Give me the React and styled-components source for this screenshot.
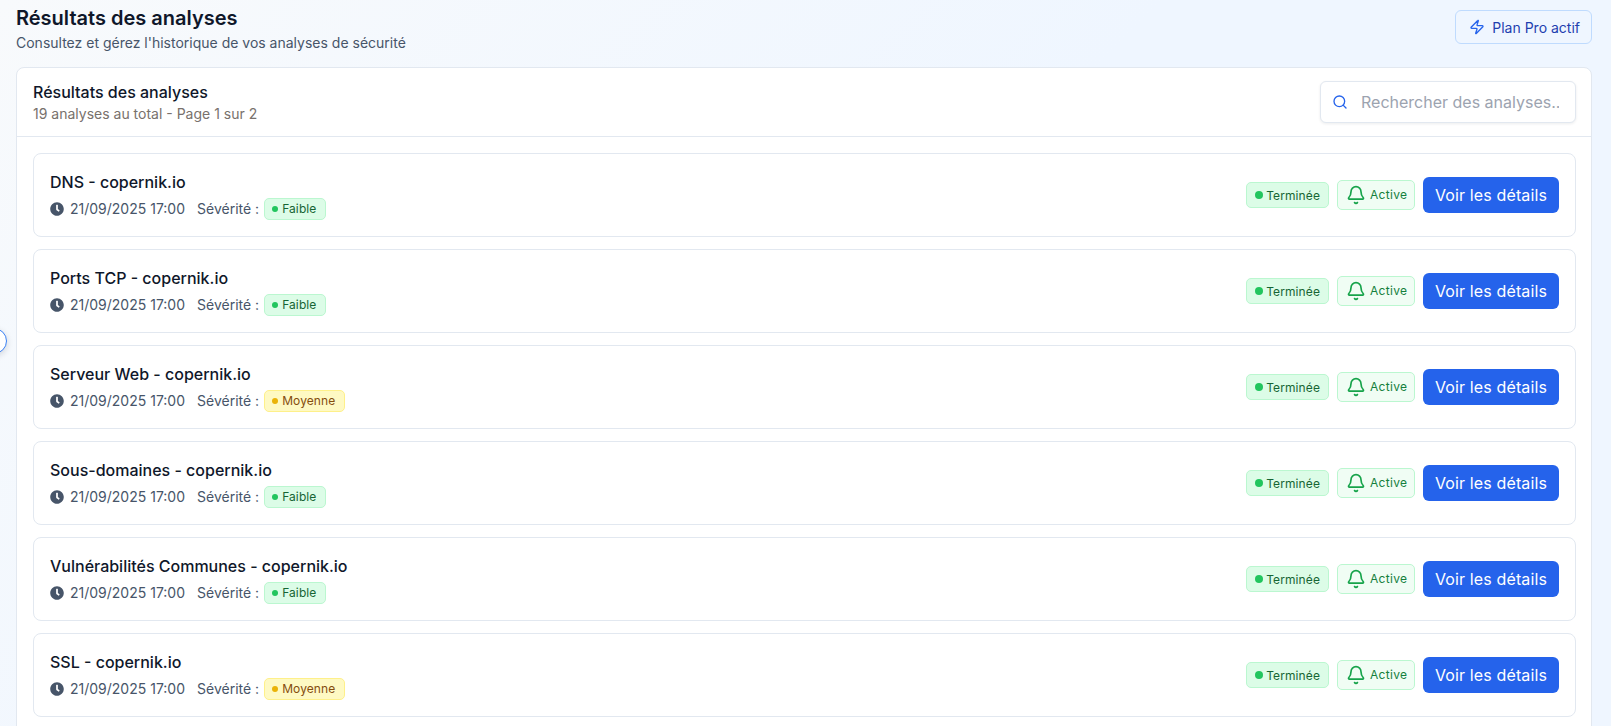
import React from "react"
import styled, { createGlobalStyle } from "styled-components"
import { Bell, Search, Zap } from "lucide-react"
import { FaClock } from "react-icons/fa"

const analyses = [
  { name: "DNS", severity: "Faible" },
  { name: "Ports TCP", severity: "Faible" },
  { name: "Serveur Web", severity: "Moyenne" },
  { name: "Sous-domaines", severity: "Faible" },
  { name: "Vulnérabilités Communes", severity: "Faible" },
  { name: "SSL", severity: "Moyenne" },
]

const App = () => {
  return (
    <>
      <GlobalStyle />
      <Page>
        <SidebarToggle />
        <PageHeader>
          <div>
            <PageTitle>Résultats des analyses</PageTitle>
            <PageSubtitle>Consultez et gérez l'historique de vos analyses de sécurité</PageSubtitle>
          </div>
          <PlanBadge>
            <Zap size={16} strokeWidth={2} color="#2563eb" />
            Plan Pro actif
          </PlanBadge>
        </PageHeader>
        <Panel>
          <PanelHeader>
            <div>
              <PanelTitle>Résultats des analyses</PanelTitle>
              <PanelSubtitle>19 analyses au total - Page 1 sur 2</PanelSubtitle>
            </div>
            <SearchBox>
              <Search size={16} strokeWidth={2} color="#2563eb" />
              <SearchInput placeholder="Rechercher des analyses..." readOnly />
            </SearchBox>
          </PanelHeader>
          <RowList>
            {analyses.map((a) => (
              <Row key={a.name}>
                <div>
                  <RowTitle>{a.name} - copernik.io</RowTitle>
                  <RowMeta>
                    <DateLabel>
                      <FaClock size={14} color="#475569" />
                      21/09/2025 17:00
                    </DateLabel>
                    <SeverityLabel>Sévérité :</SeverityLabel>
                    <SeverityTag $level={a.severity}>
                      <Dot $size={6} $color={a.severity === "Faible" ? "#22c55e" : "#eab308"} />
                      {a.severity}
                    </SeverityTag>
                  </RowMeta>
                </div>
                <RowActions>
                  <StatusTag>
                    <Dot $size={8} $color="#22c55e" />
                    Terminée
                  </StatusTag>
                  <AlertTag>
                    <Bell size={20} strokeWidth={2} color="#16a34a" />
                    <AlertText>Active</AlertText>
                  </AlertTag>
                  <DetailsButton>Voir les détails</DetailsButton>
                </RowActions>
              </Row>
            ))}
          </RowList>
        </Panel>
      </Page>
    </>
  )
}

export default App

const GlobalStyle = createGlobalStyle`
  html, body {
    margin: 0;
    height: 100%;
    overflow: hidden;
  }
  body {
    font-family: Inter, "Liberation Sans", sans-serif;
    color: #0f172a;
  }
  * {
    box-sizing: border-box;
  }
`

const Page = styled.div`
  position: relative;
  height: 726px;
  overflow: hidden;
  padding: 6px 19px 0 16px;
  background: linear-gradient(135deg, #f8fafc 0%, #eff6ff 50%, #eff6ff 100%);
`

const SidebarToggle = styled.div`
  position: absolute;
  left: -19px;
  top: 328px;
  width: 26px;
  height: 26px;
  border-radius: 50%;
  background: #fff;
  border: 1.5px solid #3b82f6;
  box-shadow: 0 2px 6px rgba(15, 23, 42, 0.15);
`

const PageHeader = styled.header`
  display: flex;
  justify-content: space-between;
  align-items: flex-start;
  height: 61px;
`

const PageTitle = styled.h1`
  margin: 0;
  font-size: 20px;
  line-height: 24px;
  font-weight: 600;
  color: #0f172a;
`

const PageSubtitle = styled.p`
  margin: 3px 0 0;
  font-size: 14px;
  line-height: 20px;
  color: #475569;
`

const PlanBadge = styled.div`
  display: flex;
  align-items: center;
  gap: 7px;
  height: 34px;
  margin-top: 4px;
  padding: 0 11px 0 13px;
  border: 1px solid #bfdbfe;
  border-radius: 6px;
  background: #eff6ff;
  color: #1e40af;
  font-size: 14px;
  font-weight: 400;
`

const Panel = styled.section`
  background: #fff;
  border: 1px solid #e2e8f0;
  border-radius: 8px;
`

const PanelHeader = styled.div`
  display: flex;
  justify-content: space-between;
  align-items: center;
  height: 69px;
  padding: 0 15px 0 16px;
  border-bottom: 1px solid #e2e8f0;
`

const PanelTitle = styled.h2`
  margin: 0;
  font-size: 16px;
  line-height: 24px;
  font-weight: 500;
  color: #0f172a;
`

const PanelSubtitle = styled.p`
  margin: 0;
  font-size: 14px;
  line-height: 20px;
  color: #78716c;
`

const SearchBox = styled.div`
  display: flex;
  align-items: center;
  gap: 13px;
  width: 256px;
  height: 42px;
  padding: 0 16px 0 11px;
  background: #fff;
  border: 1px solid #e2e8f0;
  border-radius: 6px;
  box-shadow: 0 1px 3px rgba(15, 23, 42, 0.08);
`

const SearchInput = styled.input`
  flex: 1;
  min-width: 0;
  border: 0;
  outline: 0;
  padding: 0;
  background: transparent;
  font: inherit;
  font-size: 16px;
  &::placeholder {
    color: #9ca3af;
  }
`

const RowList = styled.div`
  display: flex;
  flex-direction: column;
  gap: 12px;
  padding: 16px 15px 16px 16px;
`

const Row = styled.article`
  display: flex;
  justify-content: space-between;
  align-items: center;
  height: 84px;
  padding: 0 16px;
  border: 1px solid #e2e8f0;
  border-radius: 8px;
  background: #fff;
`

const RowTitle = styled.h3`
  margin: 0 0 4px;
  font-size: 16px;
  line-height: 24px;
  font-weight: 500;
  color: #0f172a;
`

const RowMeta = styled.div`
  display: flex;
  align-items: center;
  font-size: 14px;
  line-height: 20px;
  color: #475569;
`

const DateLabel = styled.span`
  display: flex;
  align-items: center;
  gap: 6px;
  margin-right: 12px;
`

const SeverityLabel = styled.span`
  margin-right: 5px;
`

const SeverityTag = styled.span`
  display: flex;
  align-items: center;
  gap: 4px;
  height: 22px;
  padding: 0 9px 0 7px;
  border-radius: 5px;
  font-size: 12px;
  letter-spacing: 0.1px;
  border: 1px solid ${(p) => (p.$level === "Faible" ? "#bbf7d0" : "#fef08a")};
  background: ${(p) => (p.$level === "Faible" ? "#dcfce7" : "#fef9c3")};
  color: ${(p) => (p.$level === "Faible" ? "#166534" : "#854d0e")};
`

const Dot = styled.span`
  width: ${(p) => p.$size}px;
  height: ${(p) => p.$size}px;
  border-radius: 50%;
  background: ${(p) => p.$color};
`

const RowActions = styled.div`
  display: flex;
  align-items: center;
  gap: 8px;
`

const StatusTag = styled.span`
  display: flex;
  align-items: center;
  gap: 3px;
  height: 26px;
  padding: 0 8px;
  border: 1px solid #bbf7d0;
  border-radius: 5px;
  background: #dcfce7;
  color: #166534;
  font-size: 12px;
  letter-spacing: 0.1px;
`

const AlertTag = styled.span`
  display: flex;
  align-items: center;
  gap: 4px;
  height: 30px;
  width: 78px;
  padding: 0 0 0 8px;
  border: 1px solid #bbf7d0;
  border-radius: 5px;
  background: #f0fdf4;
  color: #15803d;
  font-size: 12px;
  letter-spacing: 0.3px;
  svg {
    flex-shrink: 0;
  }
`

const AlertText = styled.span`
  margin-bottom: 2px;
`

const DetailsButton = styled.button`
  width: 136px;
  height: 36px;
  padding: 0;
  border: 0;
  border-radius: 6px;
  background: #2563eb;
  color: #fff;
  font-family: inherit;
  font-size: 16px;
  font-weight: 400;
  letter-spacing: 0.13px;
`
